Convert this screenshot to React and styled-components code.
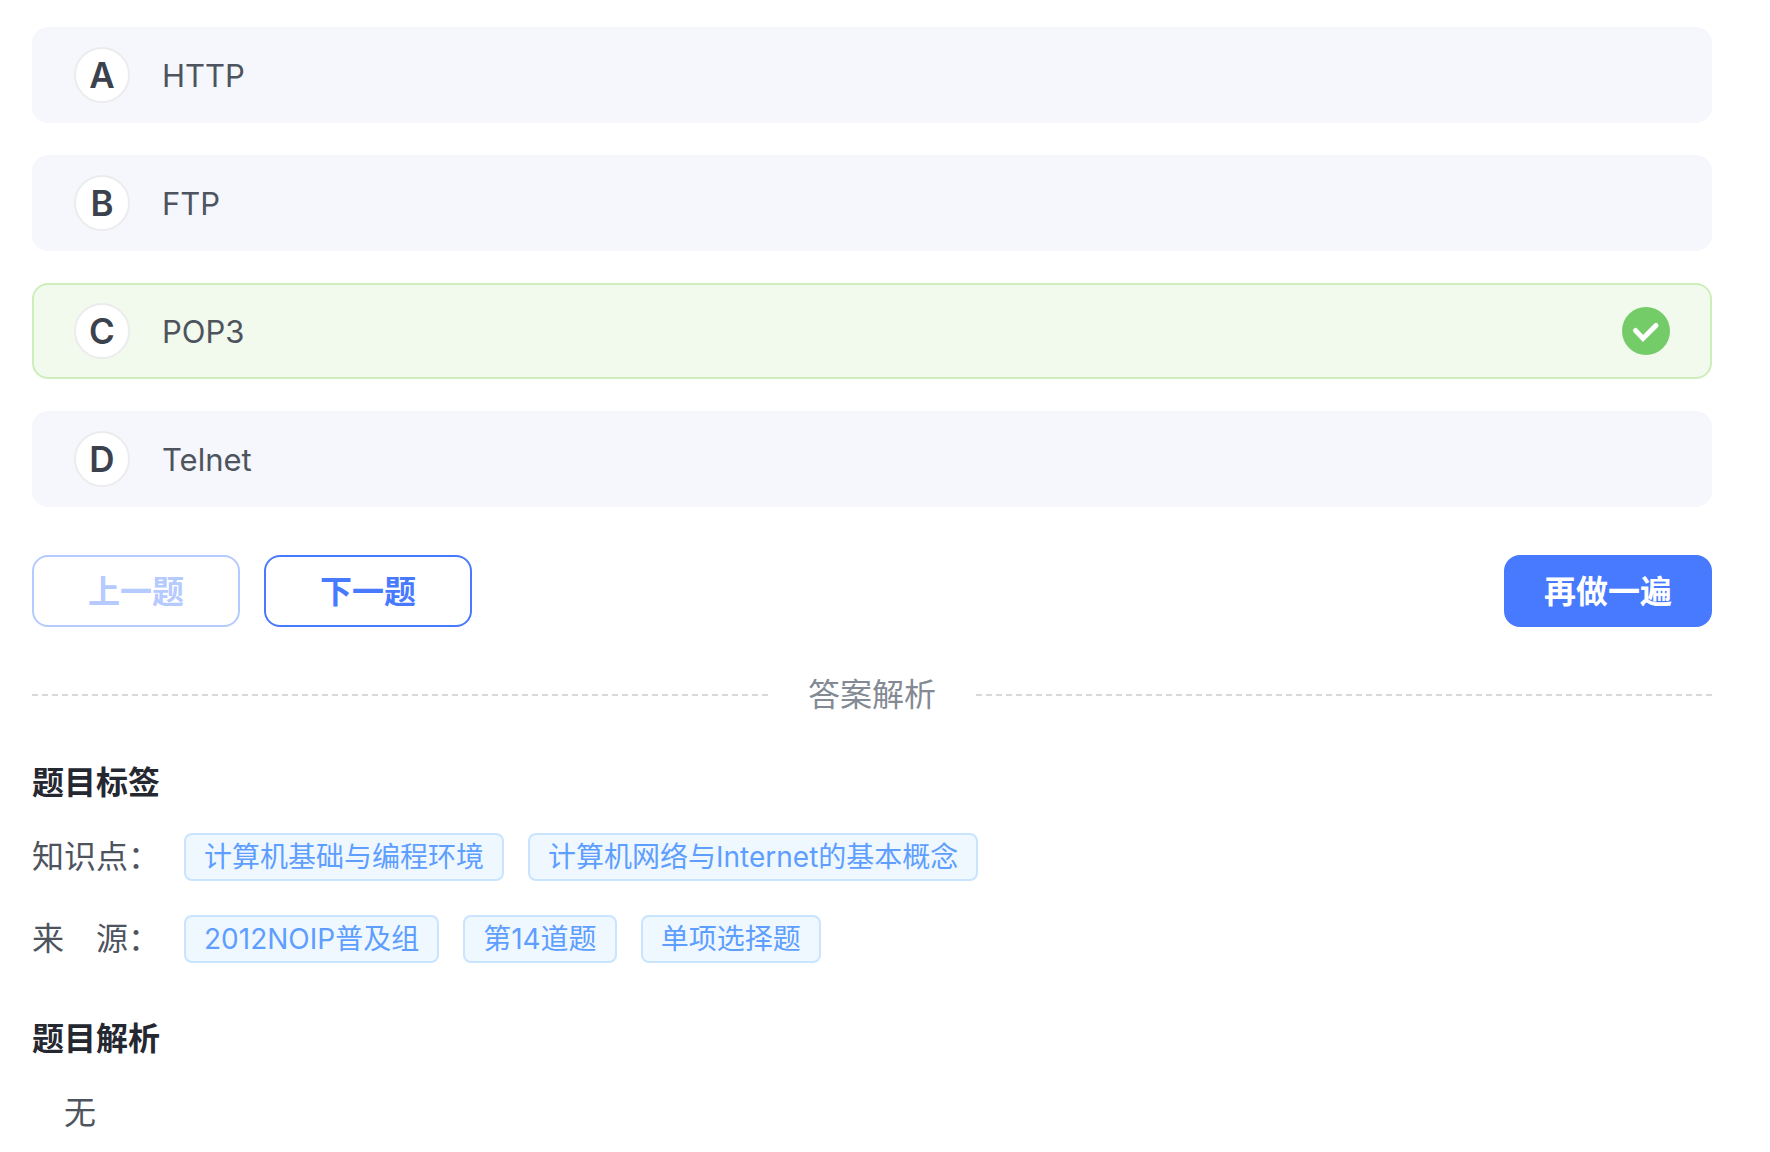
import React from 'react'
import styled, { createGlobalStyle } from 'styled-components'

const GlobalStyle = createGlobalStyle`
  * {
    box-sizing: border-box;
  }

  body {
    margin: 0;
    background: #fff;
    color: #4e545e;
    font-family: Inter, 'Noto Sans CJK SC', sans-serif;
    font-size: 32px;
    line-height: 48px;
  }
`

const Page = styled.main`
  padding: 27px 58px 16px 32px;
`

const OptionList = styled.div`
  display: flex;
  flex-direction: column;
  gap: 32px;
`

const Option = styled.label`
  position: relative;
  display: flex;
  align-items: center;
  gap: 32px;
  height: 96px;
  padding: 0 40px;
  border: 2px solid ${({ $correct }) => ($correct ? '#cdeebb' : 'transparent')};
  border-radius: 16px;
  background: ${({ $correct }) => ($correct ? '#f2f9ed' : '#f6f7fc')};
  font-size: 31px;
`

const OptionInput = styled.input`
  position: absolute;
  inset: 0;
  width: 100%;
  height: 100%;
  margin: 0;
  opacity: 0;
`

const OptionLetter = styled.span`
  display: flex;
  align-items: center;
  justify-content: center;
  width: 56px;
  height: 56px;
  border: 2px solid #ececee;
  border-radius: 50%;
  background: #fff;
  color: #3b424d;
  font-size: 35px;
  font-weight: 600;
`

const OptionText = styled.span`
  flex: 1;
  padding-top: 2px;
`

const Actions = styled.div`
  display: flex;
  gap: 24px;
  margin-top: 48px;
`

const Button = styled.button`
  width: 208px;
  height: 72px;
  padding: 2px 0 0;
  border: 2px solid #487aff;
  border-radius: 16px;
  background: ${({ $primary }) => ($primary ? '#487aff' : '#fff')};
  color: ${({ $primary }) => ($primary ? '#fff' : '#487aff')};
  font: inherit;
  font-weight: 600;

  &:disabled {
    border-color: #b5caff;
    color: #b5caff;
  }

  &:last-child {
    margin-left: auto;
  }
`

const Divider = styled.div`
  display: flex;
  align-items: center;
  gap: 40px;
  margin-top: 44px;
  color: #838a93;

  &::before,
  &::after {
    content: '';
    flex: 1;
    border-top: 2px dashed #d8d8d8;
  }
`

const Section = styled.section`
  margin-top: ${({ $gap }) => $gap}px;
`

const Title = styled.h2`
  margin: 0 0 26px;
  color: #252831;
  font-size: 32px;
  font-weight: 600;
`

const TagRow = styled.div`
  display: flex;
  align-items: center;
  gap: 24px;

  & + & {
    margin-top: 34px;
  }
`

const Tag = styled.span`
  height: 48px;
  padding: 0 18px;
  border: 2px solid #c8e4ff;
  border-radius: 8px;
  background: #f0f8ff;
  color: #5e9eff;
  font-size: 28px;
  line-height: 44px;
  white-space: nowrap;
`

const Analysis = styled.p`
  margin: 0;
  padding-left: 32px;
`

const options = [
  { letter: 'A', text: 'HTTP' },
  { letter: 'B', text: 'FTP' },
  { letter: 'C', text: 'POP3' },
  { letter: 'D', text: 'Telnet' }
]

const answer = 'C'

const tags = [
  { label: '知识点：', items: ['计算机基础与编程环境', '计算机网络与Internet的基本概念'] },
  { label: '来　源：', items: ['2012NOIP普及组', '第14道题', '单项选择题'] }
]

function CheckIcon() {
  return (
    <svg width="48" height="48" viewBox="0 0 48 48" aria-hidden="true">
      <circle cx="24" cy="24" r="24" fill="#73cc68" />
      <path
        d="M13.5 23.5L21 31.5L34 18.5"
        fill="none"
        stroke="#fff"
        strokeWidth="5"
        strokeLinecap="round"
      />
    </svg>
  )
}

function App() {
  const [selected, setSelected] = React.useState(answer)

  return (
    <Page>
      <GlobalStyle />
      <OptionList role="radiogroup">
        {options.map(({ letter, text }) => {
          return <Option key={letter} $correct={letter === answer}>
            <OptionInput
              type="radio"
              name="option"
              value={letter}
              checked={selected === letter}
              onChange={() => setSelected(letter)}
            />
            <OptionLetter>{letter}</OptionLetter>
            <OptionText>{text}</OptionText>
            {letter === answer && <CheckIcon />}
          </Option>
        })}
      </OptionList>

      <Actions>
        <Button type="button" disabled>上一题</Button>
        <Button type="button">下一题</Button>
        <Button type="button" $primary>再做一遍</Button>
      </Actions>

      <Divider>答案解析</Divider>

      <Section $gap={40}>
        <Title>题目标签</Title>
        {tags.map(({ label, items }) => {
          return <TagRow key={label}>
            <span>{label}</span>
            {items.map(item => <Tag key={item}>{item}</Tag>)}
          </TagRow>
        })}
      </Section>

      <Section $gap={52}>
        <Title>题目解析</Title>
        <Analysis>无</Analysis>
      </Section>
    </Page>
  )
}

export default App
